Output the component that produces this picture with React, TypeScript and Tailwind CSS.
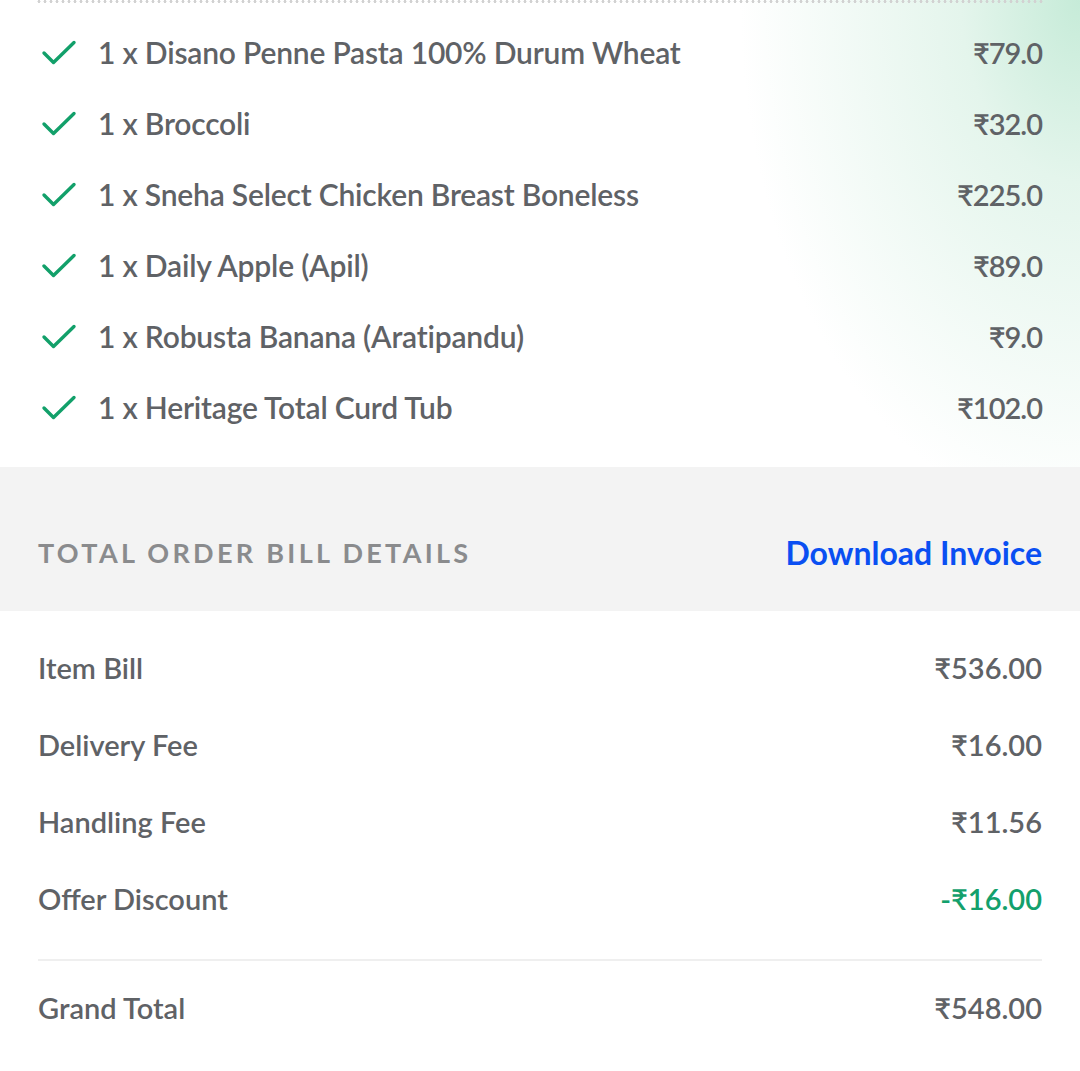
const items = [
  { name: 'Disano Penne Pasta 100% Durum Wheat', price: '₹79.0' },
  { name: 'Broccoli', price: '₹32.0' },
  { name: 'Sneha Select Chicken Breast Boneless', price: '₹225.0' },
  { name: 'Daily Apple (Apil)', price: '₹89.0' },
  { name: 'Robusta Banana (Aratipandu)', price: '₹9.0' },
  { name: 'Heritage Total Curd Tub', price: '₹102.0' },
];

const bill = [
  { label: 'Item Bill', value: '₹536.00' },
  { label: 'Delivery Fee', value: '₹16.00' },
  { label: 'Handling Fee', value: '₹11.56' },
  { label: 'Offer Discount', value: '-₹16.00', green: true },
];

function Tick() {
  return (
    <svg width="36" height="26" viewBox="0 0 36 26" className="shrink-0 ml-[3px]">
      <polyline points="3,13 12.5,22.5 33,2.5" fill="none" stroke="#12a06a" strokeWidth="3.4" strokeLinecap="round" strokeLinejoin="round" />
    </svg>
  );
}

export default function App() {
  return (
    <div className="w-[1080px] min-h-[1071px] bg-white text-[#5f6266] font-['Lato','DejaVu_Sans',sans-serif]">
      {/* ordered items */}
      <div className="bg-[radial-gradient(ellipse_340px_520px_at_100%_0%,#c6ebd8,#e4f5ec_35%,transparent)] pb-[24px]">
        <div className="mx-[36px] h-[3px] bg-[radial-gradient(circle,#d2d2d2_1.4px,transparent_1.6px)] bg-[length:6px_3px]" />
        <div className="px-[38px] pt-[14px]">
          {items.map((it) => (
            <div key={it.name} className="flex h-[71px] items-center">
              <Tick />
              <span className="ml-[21px] text-[30px] font-semibold tracking-[-0.2px]">1 x {it.name}</span>
              <span className="ml-auto text-[29px] font-semibold tracking-[-1px]">{it.price}</span>
            </div>
          ))}
        </div>
      </div>

      {/* bill header */}
      <div className="bg-[#f3f3f3] h-[144px] px-[38px] pt-[70px] flex items-start justify-between">
        <span className="text-[27px] leading-[32px] font-bold tracking-[3.3px] text-[#8a8b8d]">TOTAL ORDER BILL DETAILS</span>
        <span className="text-[32px] leading-[32px] font-bold text-[#0a4ff2]">Download Invoice</span>
      </div>

      {/* bill rows */}
      <div className="px-[38px] pt-[18px]">
        {bill.map((b) => (
          <div key={b.label} className="flex h-[77px] items-center justify-between text-[29px] font-semibold">
            <span>{b.label}</span>
            <span className={b.green ? 'text-[#13a06c]' : ''}>{b.value}</span>
          </div>
        ))}
        <div className="mt-[22px] h-[2px] bg-[#efefef]" />
        <div className="flex h-[77px] mt-[8px] items-center justify-between text-[29px] font-semibold">
          <span>Grand Total</span>
          <span>₹548.00</span>
        </div>
      </div>
    </div>
  );
}
